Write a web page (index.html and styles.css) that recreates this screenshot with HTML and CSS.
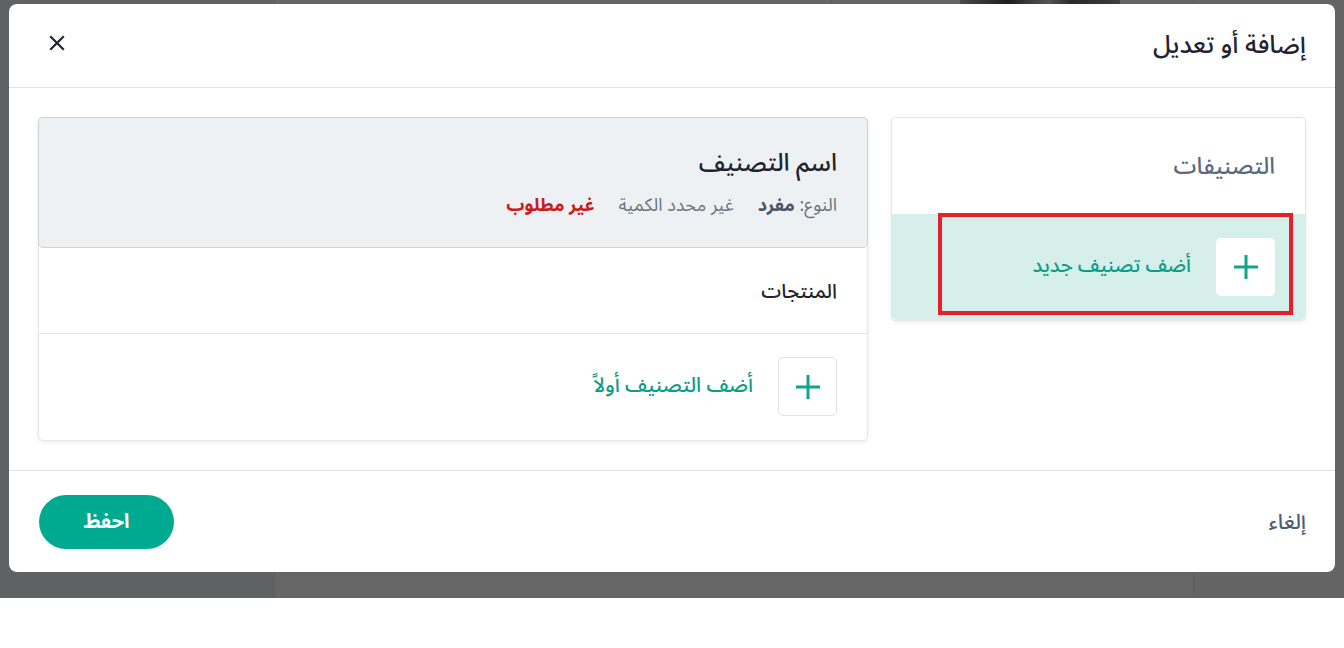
FILE: index.html
```html
<!DOCTYPE html>
<html lang="ar" dir="rtl">
<head>
<meta charset="utf-8">
<title>إضافة أو تعديل</title>
<link rel="stylesheet" href="styles.css">
</head>
<body>
<div class="backdrop">
  <div class="bg-cols">
    <div class="bg-col bg-right"></div>
    <div class="bg-col bg-mid"><span class="bg-img"></span><span class="bg-line"></span></div>
    <div class="bg-col bg-left"></div>
  </div>

  <div class="modal">
    <header class="modal-head">
      <h1 class="modal-title">إضافة أو تعديل</h1>
      <button class="close" aria-label="إغلاق">
        <svg width="16" height="16" viewBox="0 0 16 16"><path d="M2 2L14 14M14 2L2 14" stroke="#1f2430" stroke-width="2.2" stroke-linecap="square"/></svg>
      </button>
    </header>

    <div class="modal-body">
      <section class="card cats">
        <div class="cats-head">التصنيفات</div>
        <div class="cats-add">
          <span class="plus-box">
            <svg width="26" height="26" viewBox="0 0 26 26"><path d="M13 1V25M1 13H25" stroke="#10a58c" stroke-width="3"/></svg>
          </span>
          <span class="add-text">أضف تصنيف جديد</span>
          <span class="highlight"></span>
        </div>
      </section>

      <section class="card detail">
        <div class="detail-top">
          <div class="detail-title">اسم التصنيف</div>
          <div class="meta">
            <span class="meta-item">النوع: <b class="meta-val">مفرد</b></span>
            <span class="meta-item">غير محدد الكمية</span>
            <span class="meta-item meta-red">غير مطلوب</span>
          </div>
        </div>
        <div class="products-head">المنتجات</div>
        <div class="products-add">
          <span class="plus-box plus-bordered">
            <svg width="26" height="26" viewBox="0 0 26 26"><path d="M13 1V25M1 13H25" stroke="#10a58c" stroke-width="3"/></svg>
          </span>
          <span class="add-text">أضف التصنيف أولاً</span>
        </div>
      </section>
    </div>

    <footer class="modal-foot">
      <span class="cancel">إلغاء</span>
      <button class="save">احفظ</button>
    </footer>
  </div>
</div>
</body>
</html>
```
FILE: styles.css
```css
* { box-sizing: border-box; }
html, body { margin: 0; padding: 0; background: #ffffff; }
body {
  font-family: "Noto Sans Arabic", "Noto Kufi Arabic", "DejaVu Sans", sans-serif;
  color: #1f2430;
}

.backdrop {
  position: relative;
  height: 598px;
  width: 1344px;
  background: #666666;
  overflow: hidden;
}

.bg-cols {
  display: flex;
  height: 100%;
}
.bg-col { height: 100%; }
.bg-right { width: 151px; background: #646464; border-left: 1px solid #5c5c5c; }
.bg-mid { flex: 1; background: #666666; position: relative; }
.bg-left { width: 275px; background: #606163; border-right: 1px solid #5d5d5f; }
.bg-img {
  position: absolute; top: 0; left: 685px; width: 160px; height: 8px;
  background: linear-gradient(90deg, #4a4a4a, #1e1e1e 30%, #555 55%, #2a2a2a 70%, #3e3e3e);
}
.bg-line {
  position: absolute; top: 0; left: 556px; width: 1px; height: 8px; background: #2d6b61;
}

.modal {
  position: absolute;
  top: 4px;
  left: 9px;
  width: 1326px;
  height: 568px;
  background: #ffffff;
  border-radius: 8px;
  display: flex;
  flex-direction: column;
}

.modal-head {
  height: 84px;
  border-bottom: 1px solid #e2e4e9;
  display: flex;
  align-items: center;
  justify-content: space-between;
  padding: 0 29px 0 40px;
}
.modal-title {
  margin: 0;
  font-size: 25px;
  font-weight: 500;
  color: #1f2430;
  line-height: 34px;
  padding-bottom: 2px;
}
.close {
  border: 0;
  background: none;
  padding: 0;
  width: 16px;
  height: 16px;
  display: flex;
  margin-bottom: 6px;
}

.modal-body {
  height: 383px;
  display: flex;
  align-items: flex-start;
  gap: 23px;
  padding: 29px 29px 0 29px;
  border-bottom: 1px solid #e2e4e9;
}

.card {
  background: #ffffff;
  border: 1px solid #e4e6ea;
  border-radius: 5px;
  box-shadow: 0 1px 4px rgba(0, 0, 0, 0.08);
}

.cats {
  width: 415px;
  flex: none;
  overflow: visible;
}
.cats-head {
  height: 96px;
  display: flex;
  align-items: center;
  padding: 0 30px 0;
  font-size: 23px;
  font-weight: 500;
  color: #5a6a80;
}
.cats-add {
  position: relative;
  height: 106px;
  background: #d6efeb;
  border-radius: 0 0 5px 5px;
  display: flex;
  align-items: center;
  gap: 25px;
  padding: 0 30px 0 30px;
}
.highlight {
  position: absolute;
  top: -1px;
  right: 12px;
  left: 46px;
  bottom: 5px;
  border: 4px solid #e4202a;
  pointer-events: none;
}

.plus-box {
  width: 59px;
  height: 58px;
  background: #ffffff;
  border-radius: 5px;
  display: flex;
  align-items: center;
  justify-content: center;
  flex: none;
}
.plus-bordered {
  height: 59px;
  border: 1px solid #dfe2e7;
}
.add-text {
  font-size: 20px;
  font-weight: 500;
  color: #0e9c85;
  padding-bottom: 2px;
}
.products-add .add-text { font-size: 20.5px; }

.detail {
  flex: 1;
  height: 324px;
}
.detail-top {
  background: #eef1f4;
  border: 1px solid #cdd3da;
  border-radius: 5px;
  margin: -1px;
  height: 131px;
  padding: 28px 30px 0;
}
.detail-title {
  font-size: 24.5px;
  font-weight: 500;
  line-height: 34px;
  color: #1f2430;
}
.meta {
  display: flex;
  gap: 24px;
  margin-top: 13px;
  font-size: 18px;
  line-height: 24px;
  color: #6b7480;
}
.meta-val { color: #4b5565; font-weight: 700; }
.meta-red { color: #cc1b1b; font-weight: 700; }

.products-head {
  height: 87px;
  border-bottom: 1px solid #e4e6ea;
  display: flex;
  align-items: center;
  padding: 4px 30px 0;
  font-size: 20px;
  font-weight: 500;
  color: #1f2430;
}
.products-add {
  height: 105px;
  display: flex;
  align-items: center;
  gap: 25px;
  padding: 0 30px;
}

.modal-foot {
  flex: 1;
  display: flex;
  align-items: center;
  justify-content: space-between;
  padding: 0 29px 0 30px;
}
.cancel {
  font-size: 21px;
  color: #4d5d72;
  font-weight: 500;
}
.save {
  width: 135px;
  height: 54px;
  border: 0;
  border-radius: 27px;
  background: #00aa91;
  color: #ffffff;
  font-family: inherit;
  font-size: 20px;
  font-weight: 700;
}
```
